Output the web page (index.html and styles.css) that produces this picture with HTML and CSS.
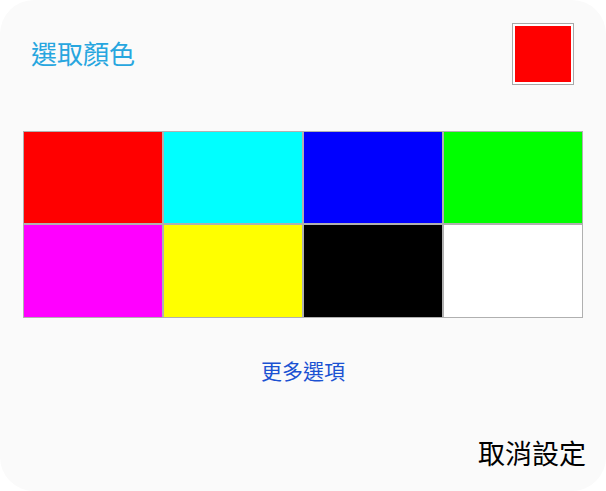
FILE: index.html
```html
<!DOCTYPE html>
<html>
<head>
<meta charset="utf-8">
<link rel="stylesheet" href="styles.css">
</head>
<body>
<div class="dialog">
  <div class="header">
    <div class="title">選取顏色</div>
    <div class="current"><div class="current-fill"></div></div>
  </div>
  <div class="grid">
    <div class="cell" style="background:#ff0000"></div>
    <div class="cell" style="background:#00ffff"></div>
    <div class="cell" style="background:#0000ff"></div>
    <div class="cell" style="background:#00ff00"></div>
    <div class="cell" style="background:#ff00ff"></div>
    <div class="cell" style="background:#ffff00"></div>
    <div class="cell" style="background:#000000"></div>
    <div class="cell" style="background:#ffffff"></div>
  </div>
  <div class="more">更多選項</div>
  <div class="footer"><span class="cancel">取消設定</span></div>
</div>
</body>
</html>
```
FILE: styles.css
```css
html, body {
  margin: 0;
  padding: 0;
  background: #ffffff;
}
body {
  width: 606px;
  height: 491px;
  overflow: hidden;
  font-family: "Noto Sans CJK TC", "Noto Sans CJK SC", sans-serif;
}
.dialog {
  box-sizing: border-box;
  width: 606px;
  height: 491px;
  background: #fafafa;
  border-radius: 34px;
  padding: 23px 23px 0 23px;
  display: flex;
  flex-direction: column;
}
.header {
  display: flex;
  justify-content: space-between;
  align-items: center;
  height: 62px;
}
.title {
  padding-left: 8px;
  font-size: 26px;
  line-height: 30px;
  color: #27a6df;
  margin-top: -3px;
}
.current {
  box-sizing: border-box;
  width: 62px;
  height: 62px;
  margin-right: 9px;
  border: 1px solid #a8a8a8;
  background: #ffffff;
  padding: 2px;
}
.current-fill {
  width: 100%;
  height: 100%;
  background: #ff0000;
}
.grid {
  margin-top: 46px;
  display: grid;
  grid-template-columns: repeat(4, 140px);
  grid-template-rows: 93px 94px;
}
.cell {
  box-sizing: border-box;
  border: 1px solid #b0b0b0;
}
.more {
  margin-top: 39px;
  text-align: center;
  font-size: 21px;
  line-height: 26px;
  color: #1b52d2;
}
.footer {
  margin-top: 55px;
  display: flex;
  justify-content: flex-end;
  margin-right: -3px;
}
.cancel {
  font-size: 27px;
  line-height: 30px;
  color: #000000;
}
```
